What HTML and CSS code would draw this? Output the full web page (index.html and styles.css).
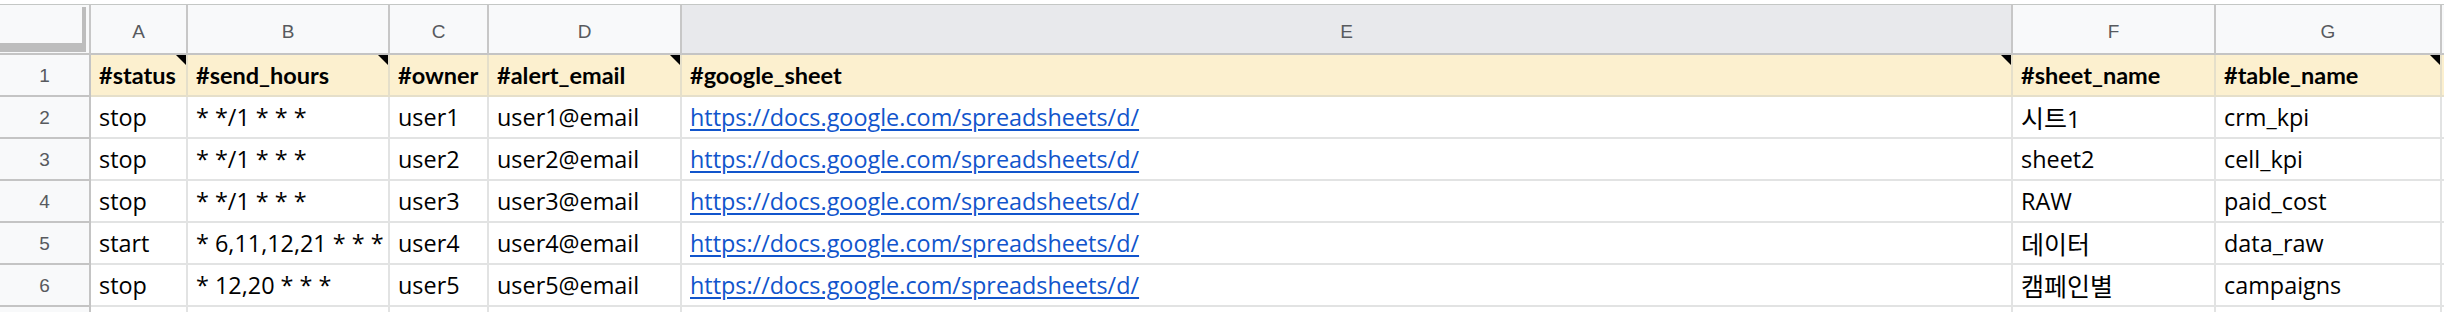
FILE: index.html
```html
<!DOCTYPE html>
<html lang="ko">
<head>
<meta charset="utf-8">
<title>Sheet</title>
<link rel="stylesheet" href="styles.css">
</head>
<body>
<div class="sheet">
  <div class="cell corner"><div class="freeze"></div></div>
  <div class="cell colhead">A</div>
  <div class="cell colhead">B</div>
  <div class="cell colhead">C</div>
  <div class="cell colhead">D</div>
  <div class="cell colhead active">E</div>
  <div class="cell colhead">F</div>
  <div class="cell colhead">G</div>
  <div class="cell colhead"></div>

  <div class="cell rowhead">1</div>
  <div class="cell hdr note">#status</div>
  <div class="cell hdr note">#send_hours</div>
  <div class="cell hdr">#owner</div>
  <div class="cell hdr note">#alert_email</div>
  <div class="cell hdr note">#google_sheet</div>
  <div class="cell hdr">#sheet_name</div>
  <div class="cell hdr note">#table_name</div>
  <div class="cell hdr"></div>

  <div class="cell rowhead">2</div>
  <div class="cell">stop</div>
  <div class="cell">* */1 * * *</div>
  <div class="cell">user1</div>
  <div class="cell">user1@email</div>
  <div class="cell"><span class="link">https://docs.google.com/spreadsheets/d/</span></div>
  <div class="cell"><span class="ko">시트</span>1</div>
  <div class="cell">crm_kpi</div>
  <div class="cell"></div>

  <div class="cell rowhead">3</div>
  <div class="cell">stop</div>
  <div class="cell">* */1 * * *</div>
  <div class="cell">user2</div>
  <div class="cell">user2@email</div>
  <div class="cell"><span class="link">https://docs.google.com/spreadsheets/d/</span></div>
  <div class="cell">sheet2</div>
  <div class="cell">cell_kpi</div>
  <div class="cell"></div>

  <div class="cell rowhead">4</div>
  <div class="cell">stop</div>
  <div class="cell">* */1 * * *</div>
  <div class="cell">user3</div>
  <div class="cell">user3@email</div>
  <div class="cell"><span class="link">https://docs.google.com/spreadsheets/d/</span></div>
  <div class="cell">RAW</div>
  <div class="cell">paid_cost</div>
  <div class="cell"></div>

  <div class="cell rowhead">5</div>
  <div class="cell">start</div>
  <div class="cell">* 6,11,12,21 * * *</div>
  <div class="cell">user4</div>
  <div class="cell">user4@email</div>
  <div class="cell"><span class="link">https://docs.google.com/spreadsheets/d/</span></div>
  <div class="cell"><span class="ko">데이터</span></div>
  <div class="cell">data_raw</div>
  <div class="cell"></div>

  <div class="cell rowhead">6</div>
  <div class="cell">stop</div>
  <div class="cell">* 12,20 * * *</div>
  <div class="cell">user5</div>
  <div class="cell">user5@email</div>
  <div class="cell"><span class="link">https://docs.google.com/spreadsheets/d/</span></div>
  <div class="cell"><span class="ko">캠페인별</span></div>
  <div class="cell">campaigns</div>
  <div class="cell"></div>

  <div class="cell rowhead"></div>
  <div class="cell"></div>
  <div class="cell"></div>
  <div class="cell"></div>
  <div class="cell"></div>
  <div class="cell"></div>
  <div class="cell"></div>
  <div class="cell"></div>
  <div class="cell"></div>
</div>
</body>
</html>
```
FILE: styles.css
```css
html, body {
  margin: 0;
  padding: 0;
  background: #ffffff;
  overflow: hidden;
}

.sheet {
  margin-top: 4px;
  display: grid;
  grid-template-columns: 91px 97px 202px 99px 193px 1331px 203px 226px 1fr;
  grid-template-rows: 51px repeat(7, 42px);
  font-family: "Open Sans", "Noto Sans CJK KR", sans-serif;
  font-size: 23.4px;
  color: #000;
}

.cell {
  box-sizing: border-box;
  border-right: 2px solid #e2e3e3;
  border-bottom: 2px solid #e2e3e3;
  padding: 5px 0 0 8px;
  white-space: nowrap;
  overflow: hidden;
  line-height: 31px;
  position: relative;
}

.colhead,
.corner {
  background: #f8f9fa;
  border-top: 1px solid #c4c7c5;
  border-right-color: #c7c7c7;
  border-bottom-color: #c4c4c4;
  font-family: "Liberation Sans", Arial, sans-serif;
  font-size: 19px;
  color: #575a5e;
  display: flex;
  align-items: center;
  justify-content: center;
  padding: 4px 0 0 0;
}

.colhead.active {
  background: #e8e9ec;
}

.corner {
  padding: 2px 3px 1px 0;
  align-items: stretch;
  justify-content: stretch;
}

.freeze {
  flex: 1;
  border-right: 4px solid #bdbdbd;
  border-bottom: 9px solid #bdbdbd;
}

.rowhead {
  background: #f8f9fa;
  border-right-color: #c4c4c4;
  border-bottom-color: #c4c4c4;
  font-family: "Liberation Sans", Arial, sans-serif;
  font-size: 19px;
  color: #575a5e;
  display: flex;
  align-items: center;
  justify-content: center;
  padding: 0;
}

.hdr {
  background: #fcf0cf;
  border-right-color: #e5dfca;
  border-bottom-color: #e5dfca;
  font-family: "Lato", "Open Sans", sans-serif;
  font-weight: 700;
  font-size: 23.5px;
}

.ko {
  font-family: "Noto Sans CJK KR", sans-serif;
  font-size: 25px;
}

.note::after {
  content: "";
  position: absolute;
  top: 0;
  right: 0;
  width: 0;
  height: 0;
  border-top: 10px solid #000;
  border-left: 10px solid transparent;
}

.link {
  color: #1155cc;
  text-decoration: underline;
  text-underline-offset: 3px;
}
```
